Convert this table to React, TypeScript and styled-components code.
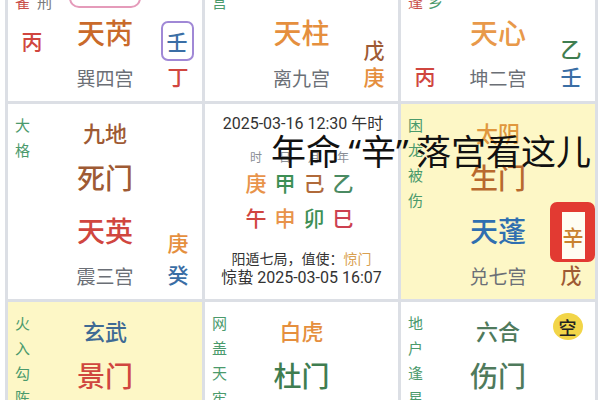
import React from "react";
import styled, { createGlobalStyle } from "styled-components";

const Global = createGlobalStyle`
  html, body { margin: 0; padding: 0; background: #ffffff; overflow: hidden; }
  body { font-family: "Noto Sans CJK SC", "Noto Sans", sans-serif; }
`;

const C = {
  green: "#4b9a6c",
  red: "#d0463f",
  orange: "#e58f3e",
  deepOrange: "#c96a2a",
  brown: "#9e5a34",
  blue: "#3a6ea5",
  gray: "#6b6f76",
  dkgreen: "#3f7d50",
  sage: "#4f7a5c",
  slate: "#3f6a94",
};

const Stage = styled.div`
  position: relative;
  width: 600px;
  height: 400px;
  overflow: hidden;
`;

const Board = styled.div`
  display: grid;
  grid-template-columns: 194px 193px 194px;
  grid-template-rows: 195px 195px 195px;
  gap: 3px;
  background: #dcdfe5;
  padding: 0 3px;
  margin: -94px 0 0 5px;
  width: max-content;
`;

const Cell = styled.div<{ $tint?: boolean }>`
  background: ${(p) => (p.$tint ? "#fdf7c6" : "#ffffff")};
  display: grid;
  grid-template-columns: 48px 1fr 48px;
  grid-template-rows: 16px 24px 18px 30px 23px 30px 20px 22px 1fr;
  overflow: hidden;
`;

const LeftCol = styled.div`
  grid-column: 1;
  grid-row: 1 / -1;
  display: flex;
  flex-direction: column;
  align-items: stretch;
  padding-top: 8px;
`;

const LabelGroup = styled.div<{ $gap: number }>`
  display: flex;
  gap: ${(p) => p.$gap}px;
  margin-left: 7px;
`;

const Label = styled.div<{ $c: string }>`
  width: 15px;
  font-size: 15px;
  line-height: 25px;
  color: ${(p) => p.$c};
  word-break: break-all;
`;

const LeftStem = styled.div<{ $c: string; $mt: number }>`
  margin-top: ${(p) => p.$mt}px;
  text-align: center;
  font-size: 21px;
  line-height: 24px;
  font-weight: 500;
  color: ${(p) => p.$c};
`;

const Deity = styled.div<{ $c: string }>`
  grid-column: 2;
  grid-row: 2;
  justify-self: center;
  font-size: 22px;
  line-height: 24px;
  font-weight: 500;
  color: ${(p) => p.$c};
`;

const Door = styled.div<{ $c: string; $boxed?: boolean }>`
  grid-column: 2;
  grid-row: 4;
  justify-self: center;
  align-self: center;
  font-size: 28px;
  line-height: 30px;
  font-weight: 500;
  color: ${(p) => p.$c};
  ${(p) =>
    p.$boxed
      ? `border: 2px solid #e59bba; border-radius: 10px; padding: 9px 6px 14px;`
      : ""}
`;

const Star = styled.div<{ $c: string }>`
  grid-column: 2;
  grid-row: 6;
  justify-self: center;
  font-size: 28px;
  line-height: 30px;
  font-weight: 500;
  color: ${(p) => p.$c};
`;

const PalaceName = styled.div`
  grid-column: 2;
  grid-row: 8;
  justify-self: center;
  font-size: 19px;
  line-height: 22px;
  color: ${C.gray};
`;

const RightCol = styled.div<{ $gap: number }>`
  grid-column: 3;
  grid-row: 1 / -1;
  display: flex;
  flex-direction: column;
  align-items: center;
  justify-content: flex-end;
  gap: ${(p) => p.$gap}px;
  padding-bottom: 13px;
`;

const Stem = styled.div<{ $c: string }>`
  font-size: 21px;
  line-height: 24px;
  font-weight: 500;
  color: ${(p) => p.$c};
`;

const PurpleBox = styled.div`
  width: 29px;
  height: 36px;
  border: 2px solid #a088d6;
  border-radius: 7px;
  display: flex;
  align-items: center;
  justify-content: center;
  margin-left: -2px;
`;

const RedBox = styled.div`
  width: 23px;
  height: 47px;
  border-style: solid;
  border-color: #e23a32;
  border-width: 10px 10px 3px 12px;
  border-radius: 7px;
  background: #fffdf2;
  display: flex;
  align-items: center;
  justify-content: center;
  margin-left: 2px;
`;

const EmptyBadge = styled.div`
  grid-column: 3;
  grid-row: 1 / 4;
  justify-self: center;
  align-self: start;
  margin: 11px 7px 0 0;
  width: 30px;
  height: 27px;
  border-radius: 50%;
  background: #f2d548;
  display: flex;
  align-items: center;
  justify-content: center;
  font-size: 18px;
  font-weight: 500;
  color: #222;
`;

const InfoCell = styled.div`
  background: #ffffff;
  display: flex;
  flex-direction: column;
  align-items: center;
  padding-top: 10px;
  font-family: Roboto, "Noto Sans CJK SC", sans-serif;
  color: #333;
`;

const DateLine = styled.div`
  font-size: 16px;
  line-height: 20px;
  margin-left: 3px;
`;

const Pillars = styled.div`
  display: grid;
  grid-template-columns: repeat(4, 29px);
  justify-items: center;
  margin-top: 14px;
  margin-left: -4px;
  font-family: "Noto Sans CJK SC", sans-serif;
`;

const Pillar = styled.div`
  display: flex;
  flex-direction: column;
  align-items: center;
`;

const PLabel = styled.div`
  font-size: 12px;
  line-height: 17px;
  color: #8a8e96;
`;

const PChar = styled.div<{ $c: string }>`
  font-size: 21px;
  line-height: 35px;
  font-weight: 500;
  color: ${(p) => p.$c};
`;

const InfoLine = styled.div<{ $size: number; $mt: number }>`
  font-size: ${(p) => p.$size}px;
  line-height: 18px;
  margin-top: ${(p) => p.$mt}px;
`;

const Accent = styled.span`
  color: #d9a050;
`;

const Annotation = styled.div`
  position: absolute;
  left: 271px;
  top: 132px;
  font-family: "Noto Sans CJK SC", sans-serif;
  font-size: 35px;
  line-height: 1;
  color: #111;
  white-space: nowrap;
`;

const Quote = styled.span<{ $side: "open" | "close" }>`
  display: inline-block;
  width: 20px;
  font-family: "Noto Sans", sans-serif;
  text-align: ${(p) => (p.$side === "open" ? "right" : "left")};
`;

type RightItem = { ch: string; c: string; box?: "purple" | "red" };
type PalaceData = {
  tint?: boolean;
  labels: { text: string; c: string }[];
  labelGap?: number;
  left?: { ch: string; c: string; mt: number };
  deity: string;
  deityC: string;
  door: string;
  doorC: string;
  doorBoxed?: boolean;
  star: string;
  starC: string;
  name: string;
  right: RightItem[];
  rightGap: number;
  empty?: boolean;
};

const Palace: React.FC<{ d: PalaceData }> = ({ d }) => (
  <Cell $tint={d.tint}>
    <LeftCol>
      <LabelGroup $gap={d.labelGap ?? 6}>
        {d.labels.map((l, i) => (
          <Label key={i} $c={l.c}>
            {l.text}
          </Label>
        ))}
      </LabelGroup>
      {d.left && (
        <LeftStem $c={d.left.c} $mt={d.left.mt}>
          {d.left.ch}
        </LeftStem>
      )}
    </LeftCol>
    <Deity $c={d.deityC}>{d.deity}</Deity>
    <Door $c={d.doorC} $boxed={d.doorBoxed}>
      {d.door}
    </Door>
    <Star $c={d.starC}>{d.star}</Star>
    <PalaceName>{d.name}</PalaceName>
    <RightCol $gap={d.rightGap}>
      {d.right.map((r, i) => {
        const s = <Stem $c={r.c}>{r.ch}</Stem>;
        if (r.box === "purple") return <PurpleBox key={i}>{s}</PurpleBox>;
        if (r.box === "red") return <RedBox key={i}>{s}</RedBox>;
        return <React.Fragment key={i}>{s}</React.Fragment>;
      })}
    </RightCol>
    {d.empty && <EmptyBadge>空</EmptyBadge>}
  </Cell>
);

const topLeft: PalaceData = {
  labels: [
    { text: "投江朱雀", c: "#c9504a" },
    { text: "六仪击刑", c: "#7a7a7a" },
  ],
  labelGap: 7,
  left: { ch: "丙", c: C.red, mt: 14 },
  deity: "九天",
  deityC: C.brown,
  door: "惊门",
  doorC: C.orange,
  doorBoxed: true,
  star: "天芮",
  starC: C.deepOrange,
  name: "巽四宫",
  right: [
    { ch: "壬", c: C.blue, box: "purple" },
    { ch: "丁", c: C.red },
  ],
  rightGap: 3,
};

const topMid: PalaceData = {
  labels: [{ text: "青龙返宫", c: C.green }],
  deity: "值符",
  deityC: C.orange,
  door: "开门",
  doorC: C.brown,
  star: "天柱",
  starC: C.orange,
  name: "离九宫",
  right: [
    { ch: "戊", c: C.brown },
    { ch: "庚", c: C.orange },
  ],
  rightGap: 3,
};

const topRight: PalaceData = {
  labels: [
    { text: "伏吟相逢", c: "#c9504a" },
    { text: "返归故乡", c: C.green },
  ],
  labelGap: 5,
  left: { ch: "丙", c: C.red, mt: 49 },
  deity: "螣蛇",
  deityC: C.brown,
  door: "休门",
  doorC: C.dkgreen,
  star: "天心",
  starC: "#e8994a",
  name: "坤二宫",
  right: [
    { ch: "乙", c: C.dkgreen },
    { ch: "壬", c: C.blue },
  ],
  rightGap: 4,
};

const midLeft: PalaceData = {
  labels: [{ text: "大格", c: C.green }],
  deity: "九地",
  deityC: C.brown,
  door: "死门",
  doorC: C.brown,
  star: "天英",
  starC: C.red,
  name: "震三宫",
  right: [
    { ch: "庚", c: C.orange },
    { ch: "癸", c: C.blue },
  ],
  rightGap: 8,
};

const midRight: PalaceData = {
  tint: true,
  labels: [{ text: "困龙被伤", c: C.green }],
  deity: "太阴",
  deityC: "#e0973e",
  door: "生门",
  doorC: "#b8692e",
  star: "天蓬",
  starC: "#2f6fb0",
  name: "兑七宫",
  right: [
    { ch: "辛", c: "#c9822f", box: "red" },
    { ch: "戊", c: C.brown },
  ],
  rightGap: 0,
};

const botLeft: PalaceData = {
  tint: true,
  labels: [{ text: "火入勾陈", c: C.green }],
  deity: "玄武",
  deityC: C.slate,
  door: "景门",
  doorC: C.red,
  star: "天任",
  starC: C.brown,
  name: "艮八宫",
  right: [
    { ch: "丁", c: C.red },
    { ch: "己", c: C.brown },
  ],
  rightGap: 3,
};

const botMid: PalaceData = {
  labels: [{ text: "网盖天牢", c: C.green }],
  deity: "白虎",
  deityC: C.orange,
  door: "杜门",
  doorC: C.dkgreen,
  star: "天冲",
  starC: C.dkgreen,
  name: "坎一宫",
  right: [
    { ch: "癸", c: C.blue },
    { ch: "辛", c: C.orange },
  ],
  rightGap: 3,
};

const botRight: PalaceData = {
  labels: [{ text: "地户逢星", c: C.green }],
  deity: "六合",
  deityC: C.sage,
  door: "伤门",
  doorC: C.sage,
  star: "天辅",
  starC: C.dkgreen,
  name: "乾六宫",
  right: [
    { ch: "己", c: C.brown },
    { ch: "乙", c: C.dkgreen },
  ],
  rightGap: 3,
  empty: true,
};

const pillars = [
  { label: "时", stem: "庚", sc: "#e8934a", branch: "午", bc: "#d0453f" },
  { label: "日", stem: "甲", sc: "#3d8f54", branch: "申", bc: "#e8934a" },
  { label: "月", stem: "己", sc: "#b06a3a", branch: "卯", bc: "#3d8f54" },
  { label: "年", stem: "乙", sc: "#4a8a62", branch: "巳", bc: "#cc4050" },
];

export default function App() {
  return (
    <Stage>
      <Global />
      <Board>
        <Palace d={topLeft} />
        <Palace d={topMid} />
        <Palace d={topRight} />
        <Palace d={midLeft} />
        <InfoCell>
          <DateLine>2025-03-16 12:30 午时</DateLine>
          <Pillars>
            {pillars.map((p) => (
              <Pillar key={p.label}>
                <PLabel>{p.label}</PLabel>
                <PChar $c={p.sc}>{p.stem}</PChar>
                <PChar $c={p.bc}>{p.branch}</PChar>
              </Pillar>
            ))}
          </Pillars>
          <InfoLine $size={14} $mt={15}>
            阳遁七局，值使：<Accent>惊门</Accent>
          </InfoLine>
          <InfoLine $size={16} $mt={1}>
            惊蛰 2025-03-05 16:07
          </InfoLine>
        </InfoCell>
        <Palace d={midRight} />
        <Palace d={botLeft} />
        <Palace d={botMid} />
        <Palace d={botRight} />
      </Board>
      <Annotation>
        年命<Quote $side="open">“</Quote>辛<Quote $side="close">”</Quote>落宫看这儿
      </Annotation>
    </Stage>
  );
}
